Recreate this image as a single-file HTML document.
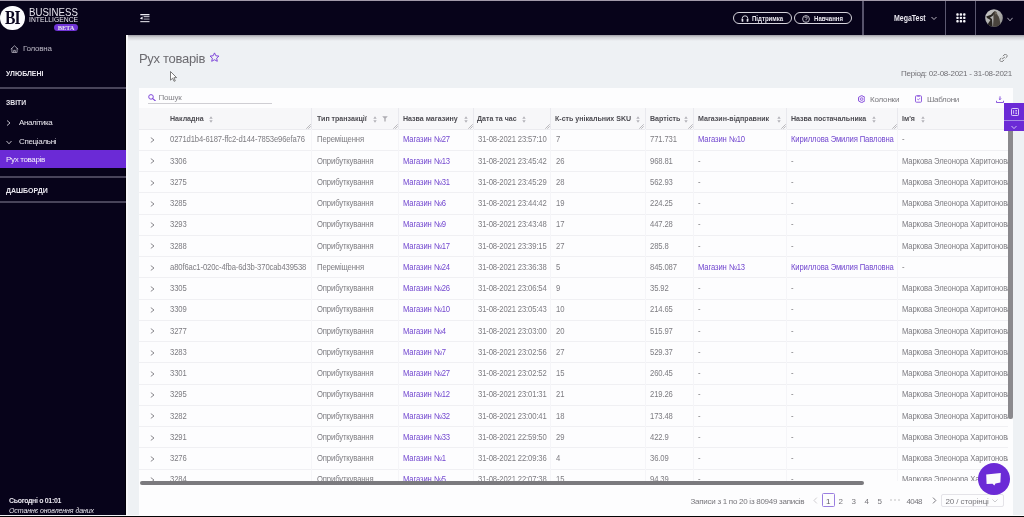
<!DOCTYPE html>
<html><head><meta charset="utf-8">
<style>
*{box-sizing:border-box;margin:0;padding:0}
html,body{width:1024px;height:517px;overflow:hidden;background:#eef1f4;font-family:"Liberation Sans",sans-serif;position:relative}
.abs{position:absolute}
#topline{left:0;top:0;width:1024px;height:1px;background:#a29aaa}
#header{left:0;top:1px;width:1024px;height:34px;background:#07031a}
#hshadow{left:126px;top:35px;width:898px;height:6px;background:linear-gradient(#9d9ca3,#cfd0d4 35%,#eef1f4)}
#sidebar{left:0;top:35px;width:126px;height:480px;background:#07031a}
#sbline{left:126px;top:35px;width:2px;height:480px;background:#f8f8fa}
#bottombar{left:0;top:516px;width:1024px;height:1px;background:#050505}
.wt{color:#e8e6ee;white-space:nowrap}
.sep{left:0;width:126px;height:2px;background:#48445a}
#card{left:139px;top:88px;width:874px;height:427px;background:#fdfdfe}
.hd{position:absolute;top:108px;height:22px;background:#f7f7f9;border-bottom:1px solid #ebebef}
.hcell{position:absolute;top:113.6px;font-size:7.8px;font-weight:bold;color:#4d4c52;line-height:10px;white-space:nowrap;transform:scaleX(0.905);transform-origin:0 0}
.vline{position:absolute;width:1px;background:#eeeef2}
.row{position:absolute;left:139px;width:874px;height:1px;background:#eeeef1}
.c{position:absolute;font-size:8.3px;letter-spacing:-0.15px;color:#7d7c81;white-space:nowrap;line-height:10px;transform:scaleX(0.925);transform-origin:0 0}
.p{color:#7247cf}
.pg{top:496.6px;font-size:8px;line-height:10px;color:#77767b;white-space:nowrap}
#wrap{position:absolute;left:0;top:0;width:1024px;height:517px;overflow:hidden;will-change:transform}
</style></head><body><div id="wrap">
<div class="abs" id="topline"></div>
<div class="abs" id="header"></div>
<div class="abs" id="sidebar"></div>
<div class="abs" id="hshadow"></div>
<div class="abs" id="sbline"></div>
<div class="abs" style="left:125px;top:35px;width:1px;height:480px;background:#020008"></div>

<!-- logo -->
<div class="abs" style="left:0;top:5.5px;width:24.6px;height:24.6px;border-radius:50%;background:#fbfbfd"></div>
<div class="abs" style="left:4.5px;top:8px;font-family:'Liberation Serif',serif;font-weight:bold;font-size:19px;line-height:19px;color:#0b0620;letter-spacing:-1.2px;transform:scaleX(0.82);transform-origin:0 50%">BI</div>
<div class="abs wt" style="left:29px;top:7px;font-size:10.5px;line-height:10px;transform:scaleX(0.92);transform-origin:0 0">BUSINESS</div>
<div class="abs wt" style="left:29px;top:16px;font-size:8px;line-height:8px;transform:scaleX(0.85);transform-origin:0 0">INTELLIGENCE</div>
<div class="abs" style="left:54px;top:24px;width:24px;height:7px;border-radius:4px;background:#7034d6"></div>
<div class="abs wt" style="left:54px;top:24px;width:24px;text-align:center;font-family:'Liberation Serif',serif;font-weight:bold;font-size:6.5px;line-height:7px;letter-spacing:-0.2px">BETA</div>

<!-- hamburger -->
<svg class="abs" style="left:139.5px;top:13.8px" width="10" height="9" viewBox="0 0 10 9"><g fill="#ecebf2"><rect x="0.3" y="0" width="9.2" height="1.3"/><rect x="3.6" y="2.1" width="5.9" height="1.1" opacity="0.85"/><rect x="3.6" y="4.5" width="5.9" height="1.2" opacity="0.6"/><rect x="0.3" y="7" width="9.2" height="1.2" opacity="0.85"/><path d="M2.6 2.5 L0.3 3.9 Q0.2 4.6 0.6 5 L2.6 5.5Z"/></g></svg>

<!-- header buttons -->
<div class="abs" style="left:733px;top:12px;width:59px;height:12px;border:1px solid #d6d4dc;border-radius:6px"></div>
<div class="abs" style="left:794px;top:12px;width:58px;height:12px;border:1px solid #d6d4dc;border-radius:6px"></div>
<div class="abs wt" style="left:752px;top:13.5px;font-size:7.6px;line-height:10px;font-weight:bold;transform:scaleX(0.8);transform-origin:0 0">Підтримка</div>
<div class="abs wt" style="left:814px;top:13.5px;font-size:7.6px;line-height:10px;font-weight:bold;transform:scaleX(0.8);transform-origin:0 0">Навчання</div>
<svg class="abs" style="left:741px;top:14.5px" width="8" height="7" viewBox="0 0 8 7"><path d="M1.2 5.5 V3.6 A2.8 2.8 0 0 1 6.8 3.6 V5.5" fill="none" stroke="#e8e6ee" stroke-width="0.9"/><rect x="0.7" y="4" width="1.6" height="2.8" rx="0.4" fill="#e8e6ee"/><rect x="5.7" y="4" width="1.6" height="2.8" rx="0.4" fill="#e8e6ee"/></svg>
<svg class="abs" style="left:802px;top:14.5px" width="8" height="8" viewBox="0 0 8 8"><circle cx="4" cy="4" r="3.4" fill="none" stroke="#e8e6ee" stroke-width="0.8"/><path d="M2.9 3 A1.15 1.15 0 1 1 4.4 4.1 Q4 4.3 4 4.9" fill="none" stroke="#e8e6ee" stroke-width="0.75"/><circle cx="4" cy="5.9" r="0.45" fill="#e8e6ee"/></svg>
<div class="abs" style="left:862px;top:1px;width:2px;height:34px;background:#57536b"></div>
<div class="abs" style="left:944.5px;top:1px;width:1.6px;height:34px;background:#5b5870"></div>
<div class="abs" style="left:974.8px;top:1px;width:1.6px;height:34px;background:#5b5870"></div>
<div class="abs wt" style="left:894px;top:12.5px;font-size:8.5px;line-height:10px;font-weight:bold;transform:scaleX(0.82);transform-origin:0 0">MegaTest</div>
<svg class="abs" style="left:930.5px;top:15.5px" width="6" height="5" viewBox="0 0 6 5"><path d="M0.5 1 L3 3.5 L5.5 1" fill="none" stroke="#e8e6ee" stroke-width="0.8"/></svg>
<svg class="abs" style="left:955.5px;top:13px" width="10" height="10" viewBox="0 0 10 10"><g fill="#f6f6fa"><rect x="0.3" y="0.3" width="2.4" height="2.4" rx="0.8"/><rect x="3.7" y="0.3" width="2.4" height="2.4" rx="0.8"/><rect x="7.1" y="0.3" width="2.4" height="2.4" rx="0.8"/><rect x="0.3" y="3.7" width="2.4" height="2.4" rx="0.8"/><rect x="3.7" y="3.7" width="2.4" height="2.4" rx="0.8"/><rect x="7.1" y="3.7" width="2.4" height="2.4" rx="0.8"/><rect x="0.3" y="7.1" width="2.4" height="2.4" rx="0.8"/><rect x="3.7" y="7.1" width="2.4" height="2.4" rx="0.8"/><rect x="7.1" y="7.1" width="2.4" height="2.4" rx="0.8"/></g></svg>
<svg class="abs" style="left:984.5px;top:8.6px" width="18" height="18" viewBox="0 0 18 18"><defs><clipPath id="av"><circle cx="9" cy="9" r="8.8"/></clipPath><linearGradient id="ag" x1="0" y1="0" x2="1" y2="1"><stop offset="0" stop-color="#cfcfcf"/><stop offset="1" stop-color="#8d8c8a"/></linearGradient></defs><g clip-path="url(#av)"><rect width="18" height="18" fill="url(#ag)"/><path d="M1.2 7.5 L6 5.8 L8.5 3 L10 2.6 L9.6 4.6 L7.5 7 L5 8.5 L7 10 L7.5 18 H1.5 Q3 14 5.5 11 L2 9Z" fill="#2a2622"/><path d="M9 2.5 Q11.5 1.5 12 4 L12.5 6 Q15 8 15.5 18 H8 L8.5 10 Q8 6 9 2.5Z" fill="#4a443d"/><path d="M10.5 3 Q12 3 11.8 5 L10.5 5.5Z" fill="#8a8175"/></g></svg>
<svg class="abs" style="left:1006.5px;top:16.5px" width="6" height="5" viewBox="0 0 6 5"><path d="M0.4 0.8 L3 3.8 L5.6 0.8" fill="none" stroke="#d8d6de" stroke-width="0.8"/></svg>

<!-- sidebar -->
<svg class="abs" style="left:10px;top:44.5px" width="9" height="8" viewBox="0 0 9 8"><path d="M0.8 4.2 L4.5 0.8 L8.2 4.2 M1.9 3.2 V7.4 H7.1 V3.2 M3.7 7.4 V5.3 H5.3 V7.4" fill="none" stroke="#bdbac6" stroke-width="0.8" stroke-linejoin="round"/></svg>
<div class="abs wt" style="left:23px;top:44px;font-size:8px;line-height:10px;color:#bdbac6;letter-spacing:-0.24px">Головна</div>
<div class="abs wt" style="left:6px;top:69px;font-size:8px;line-height:10px;font-weight:bold;transform:scaleX(0.87);transform-origin:0 0">УЛЮБЛЕНІ</div>
<div class="abs sep" style="top:87px"></div>
<div class="abs wt" style="left:6px;top:98px;font-size:8px;line-height:10px;font-weight:bold;transform:scaleX(0.85);transform-origin:0 0">ЗВІТИ</div>
<svg class="abs" style="left:6px;top:120px" width="5" height="6" viewBox="0 0 5 6"><path d="M1 0.5 L4 3 L1 5.5" fill="none" stroke="#e8e6ee" stroke-width="0.8"/></svg>
<div class="abs wt" style="left:19px;top:118px;font-size:8px;line-height:10px;letter-spacing:-0.39px">Аналітика</div>
<svg class="abs" style="left:6px;top:139.5px" width="6" height="5" viewBox="0 0 6 5"><path d="M0.5 1 L3 3.8 L5.5 1" fill="none" stroke="#e8e6ee" stroke-width="0.8"/></svg>
<div class="abs wt" style="left:19px;top:137px;font-size:8px;line-height:10px;letter-spacing:-0.32px">Спеціальні</div>
<div class="abs" style="left:0;top:150px;width:126px;height:18px;background:#6b2ad6"></div>
<div class="abs wt" style="left:6px;top:155px;font-size:8px;line-height:10px;color:#f4f0fb;letter-spacing:-0.35px">Рух товарів</div>
<div class="abs sep" style="top:176px"></div>
<div class="abs wt" style="left:6px;top:186px;font-size:8px;line-height:10px;font-weight:bold;transform:scaleX(0.875);transform-origin:0 0">ДАШБОРДИ</div>
<div class="abs sep" style="top:201px"></div>
<div class="abs wt" style="left:9px;top:496.5px;font-size:7px;line-height:8px;font-weight:bold;letter-spacing:-0.33px">Сьогодні о 01:01</div>
<div class="abs wt" style="left:9px;top:506.5px;font-size:7px;line-height:8px;font-style:italic;letter-spacing:-0.09px">Останнє оновлення даних</div>

<!-- page title -->
<div class="abs" style="left:139px;top:51px;font-size:13px;line-height:16px;color:#6c6b70;white-space:nowrap;letter-spacing:-0.3px">Рух товарів</div>
<svg class="abs" style="left:209px;top:51.8px" width="11" height="11" viewBox="0 0 11 11"><path d="M5.5 0.9 L6.85 3.75 L9.95 4.1 L7.65 6.2 L8.3 9.3 L5.5 7.75 L2.7 9.3 L3.35 6.2 L1.05 4.1 L4.15 3.75Z" fill="none" stroke="#7a3fd8" stroke-width="0.95" stroke-linejoin="round"/></svg>
<svg class="abs" style="left:170px;top:70.8px" width="8" height="11" viewBox="0 0 8 11"><path d="M0.5 0.5 V9.2 L2.6 7.2 L4.1 10.3 L5.3 9.8 L3.9 6.7 L6.6 6.6Z" fill="#fff" stroke="#5a5a5a" stroke-width="0.8" stroke-linejoin="round"/></svg>
<svg class="abs" style="left:999px;top:54px" width="9" height="8" viewBox="0 0 9 8"><g fill="none" stroke="#777" stroke-width="0.9"><path d="M3.8 2.2 L5 1 A1.5 1.5 0 0 1 7.8 3 L6.6 4.2"/><path d="M5.2 5.8 L4 7 A1.5 1.5 0 0 1 1.2 5 L2.4 3.8"/><path d="M3 5 L6 3"/></g></svg>
<div class="abs" style="left:901px;top:69px;font-size:8px;letter-spacing:-0.25px;line-height:10px;color:#717075;white-space:nowrap">Період: 02-08-2021 - 31-08-2021</div>

<!-- card -->
<div class="abs" id="card"></div>
<svg class="abs" style="left:148px;top:93.5px" width="8" height="7" viewBox="0 0 8 7"><circle cx="3" cy="2.9" r="2.3" fill="none" stroke="#7a3fd8" stroke-width="0.95"/><path d="M4.7 4.6 L7.2 6.7" stroke="#7a3fd8" stroke-width="1.1" stroke-linecap="round"/></svg>
<div class="abs" style="left:158.5px;top:92.6px;font-size:8px;letter-spacing:-0.19px;line-height:10px;color:#858489">Пошук</div>
<div class="abs" style="left:148px;top:103px;width:124px;height:1px;background:#cfced3"></div>
<svg class="abs" style="left:858px;top:94.8px" width="7.4" height="8.2" viewBox="0 0 7.4 8.2"><path d="M3.7 0.5 L6.9 2.3 V5.9 L3.7 7.7 L0.5 5.9 V2.3Z" fill="#efe6fb" stroke="#8b55dd" stroke-width="1"/><circle cx="3.7" cy="4.1" r="1.3" fill="none" stroke="#8b55dd" stroke-width="0.8"/></svg>
<div class="abs" style="left:870px;top:95px;font-size:8px;letter-spacing:-0.19px;line-height:10px;color:#7a797e">Колонки</div>
<svg class="abs" style="left:915px;top:95px" width="7" height="7.6" viewBox="0 0 7 7.6"><rect x="0.5" y="0.8" width="6" height="6.4" rx="0.8" fill="none" stroke="#8b55dd" stroke-width="0.95"/><path d="M2.2 0.4 H4.8 V1.6 H2.2Z" fill="#8b55dd"/><path d="M2.2 4 L3.3 5 L4.9 3.2" fill="none" stroke="#8b55dd" stroke-width="0.8"/></svg>
<div class="abs" style="left:927px;top:95px;font-size:8px;letter-spacing:-0.3px;line-height:10px;color:#7a797e">Шаблони</div>
<svg class="abs" style="left:996px;top:96px" width="8" height="7" viewBox="0 0 8 7"><path d="M4 0.3 V3.6 M2.9 2.6 L4 3.7 L5.1 2.6 M0.5 4.8 V6.5 H7.5 V4.8" fill="none" stroke="#7a3fd8" stroke-width="0.85"/></svg>

<!-- table header -->
<div class="hd" style="left:139px;width:865px"></div>
<div class="hcell" style="left:170px">Накладна</div>
<svg class="abs" style="left:209px;top:115.5px" width="4" height="7" viewBox="0 0 4 7"><path d="M2 0.3 L3.7 2.8 H0.3Z M2 6.7 L3.7 4.2 H0.3Z" fill="#b3b2b8"/></svg>
<div class="hcell" style="left:316.8px">Тип транзакції</div>
<svg class="abs" style="left:372.5px;top:115.5px" width="4" height="7" viewBox="0 0 4 7"><path d="M2 0.3 L3.7 2.8 H0.3Z M2 6.7 L3.7 4.2 H0.3Z" fill="#b3b2b8"/></svg>
<svg class="abs" style="left:382px;top:115.5px" width="6" height="6" viewBox="0 0 6 6"><path d="M0.2 0.3 H5.8 L3.7 2.6 V5.4 H2.3 V2.6Z" fill="#aeadb3"/></svg>
<div class="hcell" style="left:403px">Назва магазину</div>
<svg class="abs" style="left:463.5px;top:115.5px" width="4" height="7" viewBox="0 0 4 7"><path d="M2 0.3 L3.7 2.8 H0.3Z M2 6.7 L3.7 4.2 H0.3Z" fill="#b3b2b8"/></svg>
<div class="hcell" style="left:477.4px">Дата та час</div>
<svg class="abs" style="left:522px;top:115.5px" width="4" height="7" viewBox="0 0 4 7"><path d="M2 0.3 L3.7 2.8 H0.3Z M2 6.7 L3.7 4.2 H0.3Z" fill="#b3b2b8"/></svg>
<div class="hcell" style="left:555px">К-сть унікальних SKU</div>
<svg class="abs" style="left:635.5px;top:115.5px" width="4" height="7" viewBox="0 0 4 7"><path d="M2 0.3 L3.7 2.8 H0.3Z M2 6.7 L3.7 4.2 H0.3Z" fill="#b3b2b8"/></svg>
<div class="hcell" style="left:650px">Вартість</div>
<svg class="abs" style="left:683.9px;top:115.5px" width="4" height="7" viewBox="0 0 4 7"><path d="M2 0.3 L3.7 2.8 H0.3Z M2 6.7 L3.7 4.2 H0.3Z" fill="#b3b2b8"/></svg>
<div class="hcell" style="left:698.4px">Магазин-відправник</div>
<svg class="abs" style="left:777.2px;top:115.5px" width="4" height="7" viewBox="0 0 4 7"><path d="M2 0.3 L3.7 2.8 H0.3Z M2 6.7 L3.7 4.2 H0.3Z" fill="#b3b2b8"/></svg>
<div class="hcell" style="left:791.1px">Назва постачальника</div>
<svg class="abs" style="left:872.3px;top:115.5px" width="4" height="7" viewBox="0 0 4 7"><path d="M2 0.3 L3.7 2.8 H0.3Z M2 6.7 L3.7 4.2 H0.3Z" fill="#b3b2b8"/></svg>
<div class="hcell" style="left:902.2px">Ім'я</div>
<svg class="abs" style="left:921px;top:115.5px" width="4" height="7" viewBox="0 0 4 7"><path d="M2 0.3 L3.7 2.8 H0.3Z M2 6.7 L3.7 4.2 H0.3Z" fill="#b3b2b8"/></svg>
<div class="vline" style="left:311px;top:108px;height:21px;background:#e9e9ee"></div>
<svg class="abs" style="left:305.7px;top:123.5px" width="5" height="5" viewBox="0 0 5 5"><path d="M0.3 4.7 L4.7 0.3 M2.3 4.7 L4.7 2.3" stroke="#8e8d93" stroke-width="0.6"/></svg>
<div class="vline" style="left:398px;top:108px;height:21px;background:#e9e9ee"></div>
<svg class="abs" style="left:392.7px;top:123.5px" width="5" height="5" viewBox="0 0 5 5"><path d="M0.3 4.7 L4.7 0.3 M2.3 4.7 L4.7 2.3" stroke="#8e8d93" stroke-width="0.6"/></svg>
<div class="vline" style="left:473px;top:108px;height:21px;background:#e9e9ee"></div>
<svg class="abs" style="left:467.7px;top:123.5px" width="5" height="5" viewBox="0 0 5 5"><path d="M0.3 4.7 L4.7 0.3 M2.3 4.7 L4.7 2.3" stroke="#8e8d93" stroke-width="0.6"/></svg>
<div class="vline" style="left:550px;top:108px;height:21px;background:#e9e9ee"></div>
<svg class="abs" style="left:544.7px;top:123.5px" width="5" height="5" viewBox="0 0 5 5"><path d="M0.3 4.7 L4.7 0.3 M2.3 4.7 L4.7 2.3" stroke="#8e8d93" stroke-width="0.6"/></svg>
<div class="vline" style="left:644.6px;top:108px;height:21px;background:#e9e9ee"></div>
<svg class="abs" style="left:639.3000000000001px;top:123.5px" width="5" height="5" viewBox="0 0 5 5"><path d="M0.3 4.7 L4.7 0.3 M2.3 4.7 L4.7 2.3" stroke="#8e8d93" stroke-width="0.6"/></svg>
<div class="vline" style="left:693px;top:108px;height:21px;background:#e9e9ee"></div>
<svg class="abs" style="left:687.7px;top:123.5px" width="5" height="5" viewBox="0 0 5 5"><path d="M0.3 4.7 L4.7 0.3 M2.3 4.7 L4.7 2.3" stroke="#8e8d93" stroke-width="0.6"/></svg>
<div class="vline" style="left:786px;top:108px;height:21px;background:#e9e9ee"></div>
<svg class="abs" style="left:780.7px;top:123.5px" width="5" height="5" viewBox="0 0 5 5"><path d="M0.3 4.7 L4.7 0.3 M2.3 4.7 L4.7 2.3" stroke="#8e8d93" stroke-width="0.6"/></svg>
<div class="vline" style="left:897px;top:108px;height:21px;background:#e9e9ee"></div>
<svg class="abs" style="left:891.7px;top:123.5px" width="5" height="5" viewBox="0 0 5 5"><path d="M0.3 4.7 L4.7 0.3 M2.3 4.7 L4.7 2.3" stroke="#8e8d93" stroke-width="0.6"/></svg>
<div class="abs" style="left:139px;top:129px;width:869px;height:352px;overflow:hidden">
<div class="abs" style="left:0;top:20.75px;width:874px;height:1px;background:#f0f0f3"></div>
<svg class="abs" style="left:11px;top:8.20px" width="5" height="6" viewBox="0 0 5 6"><path d="M0.8 0.6 L4 3 L0.8 5.4" fill="none" stroke="#6e6d73" stroke-width="0.8"/></svg>
<div class="c" style="left:31px;top:5.22px">0271d1b4-6187-ffc2-d144-7853e96efa76</div>
<div class="c" style="left:177.5px;top:5.22px">Переміщення</div>
<div class="c p" style="left:264px;top:5.22px">Магазин №27</div>
<div class="c" style="left:338.5px;top:5.22px">31-08-2021 23:57:10</div>
<div class="c" style="left:416.5px;top:5.22px">7</div>
<div class="c" style="left:510.70000000000005px;top:5.22px">771.731</div>
<div class="c p" style="left:559px;top:5.22px">Магазин №10</div>
<div class="c p" style="left:652px;top:5.22px">Кириллова Эмилия Павловна</div>
<div class="c" style="left:763px;top:5.22px">-</div>
<div class="abs" style="left:0;top:42.00px;width:874px;height:1px;background:#f0f0f3"></div>
<svg class="abs" style="left:11px;top:29.45px" width="5" height="6" viewBox="0 0 5 6"><path d="M0.8 0.6 L4 3 L0.8 5.4" fill="none" stroke="#6e6d73" stroke-width="0.8"/></svg>
<div class="c" style="left:31px;top:27.22px">3306</div>
<div class="c" style="left:177.5px;top:27.22px">Оприбуткування</div>
<div class="c p" style="left:264px;top:27.22px">Магазин №13</div>
<div class="c" style="left:338.5px;top:27.22px">31-08-2021 23:45:42</div>
<div class="c" style="left:416.5px;top:27.22px">26</div>
<div class="c" style="left:510.70000000000005px;top:27.22px">968.81</div>
<div class="c" style="left:559px;top:27.22px">-</div>
<div class="c" style="left:652px;top:27.22px">-</div>
<div class="c" style="left:763px;top:27.22px">Маркова Элеонора Харитонова</div>
<div class="abs" style="left:0;top:63.25px;width:874px;height:1px;background:#f0f0f3"></div>
<svg class="abs" style="left:11px;top:50.70px" width="5" height="6" viewBox="0 0 5 6"><path d="M0.8 0.6 L4 3 L0.8 5.4" fill="none" stroke="#6e6d73" stroke-width="0.8"/></svg>
<div class="c" style="left:31px;top:48.22px">3275</div>
<div class="c" style="left:177.5px;top:48.22px">Оприбуткування</div>
<div class="c p" style="left:264px;top:48.22px">Магазин №31</div>
<div class="c" style="left:338.5px;top:48.22px">31-08-2021 23:45:29</div>
<div class="c" style="left:416.5px;top:48.22px">28</div>
<div class="c" style="left:510.70000000000005px;top:48.22px">562.93</div>
<div class="c" style="left:559px;top:48.22px">-</div>
<div class="c" style="left:652px;top:48.22px">-</div>
<div class="c" style="left:763px;top:48.22px">Маркова Элеонора Харитонова</div>
<div class="abs" style="left:0;top:84.50px;width:874px;height:1px;background:#f0f0f3"></div>
<svg class="abs" style="left:11px;top:71.95px" width="5" height="6" viewBox="0 0 5 6"><path d="M0.8 0.6 L4 3 L0.8 5.4" fill="none" stroke="#6e6d73" stroke-width="0.8"/></svg>
<div class="c" style="left:31px;top:69.22px">3285</div>
<div class="c" style="left:177.5px;top:69.22px">Оприбуткування</div>
<div class="c p" style="left:264px;top:69.22px">Магазин №6</div>
<div class="c" style="left:338.5px;top:69.22px">31-08-2021 23:44:42</div>
<div class="c" style="left:416.5px;top:69.22px">19</div>
<div class="c" style="left:510.70000000000005px;top:69.22px">224.25</div>
<div class="c" style="left:559px;top:69.22px">-</div>
<div class="c" style="left:652px;top:69.22px">-</div>
<div class="c" style="left:763px;top:69.22px">Маркова Элеонора Харитонова</div>
<div class="abs" style="left:0;top:105.75px;width:874px;height:1px;background:#f0f0f3"></div>
<svg class="abs" style="left:11px;top:93.20px" width="5" height="6" viewBox="0 0 5 6"><path d="M0.8 0.6 L4 3 L0.8 5.4" fill="none" stroke="#6e6d73" stroke-width="0.8"/></svg>
<div class="c" style="left:31px;top:90.22px">3293</div>
<div class="c" style="left:177.5px;top:90.22px">Оприбуткування</div>
<div class="c p" style="left:264px;top:90.22px">Магазин №9</div>
<div class="c" style="left:338.5px;top:90.22px">31-08-2021 23:43:48</div>
<div class="c" style="left:416.5px;top:90.22px">17</div>
<div class="c" style="left:510.70000000000005px;top:90.22px">447.28</div>
<div class="c" style="left:559px;top:90.22px">-</div>
<div class="c" style="left:652px;top:90.22px">-</div>
<div class="c" style="left:763px;top:90.22px">Маркова Элеонора Харитонова</div>
<div class="abs" style="left:0;top:127.00px;width:874px;height:1px;background:#f0f0f3"></div>
<svg class="abs" style="left:11px;top:114.45px" width="5" height="6" viewBox="0 0 5 6"><path d="M0.8 0.6 L4 3 L0.8 5.4" fill="none" stroke="#6e6d73" stroke-width="0.8"/></svg>
<div class="c" style="left:31px;top:112.22px">3288</div>
<div class="c" style="left:177.5px;top:112.22px">Оприбуткування</div>
<div class="c p" style="left:264px;top:112.22px">Магазин №17</div>
<div class="c" style="left:338.5px;top:112.22px">31-08-2021 23:39:15</div>
<div class="c" style="left:416.5px;top:112.22px">27</div>
<div class="c" style="left:510.70000000000005px;top:112.22px">285.8</div>
<div class="c" style="left:559px;top:112.22px">-</div>
<div class="c" style="left:652px;top:112.22px">-</div>
<div class="c" style="left:763px;top:112.22px">Маркова Элеонора Харитонова</div>
<div class="abs" style="left:0;top:148.25px;width:874px;height:1px;background:#f0f0f3"></div>
<svg class="abs" style="left:11px;top:135.70px" width="5" height="6" viewBox="0 0 5 6"><path d="M0.8 0.6 L4 3 L0.8 5.4" fill="none" stroke="#6e6d73" stroke-width="0.8"/></svg>
<div class="c" style="left:31px;top:133.22px">a80f6ac1-020c-4fba-6d3b-370cab439538</div>
<div class="c" style="left:177.5px;top:133.22px">Переміщення</div>
<div class="c p" style="left:264px;top:133.22px">Магазин №24</div>
<div class="c" style="left:338.5px;top:133.22px">31-08-2021 23:36:38</div>
<div class="c" style="left:416.5px;top:133.22px">5</div>
<div class="c" style="left:510.70000000000005px;top:133.22px">845.087</div>
<div class="c p" style="left:559px;top:133.22px">Магазин №13</div>
<div class="c p" style="left:652px;top:133.22px">Кириллова Эмилия Павловна</div>
<div class="c" style="left:763px;top:133.22px">-</div>
<div class="abs" style="left:0;top:169.50px;width:874px;height:1px;background:#f0f0f3"></div>
<svg class="abs" style="left:11px;top:156.95px" width="5" height="6" viewBox="0 0 5 6"><path d="M0.8 0.6 L4 3 L0.8 5.4" fill="none" stroke="#6e6d73" stroke-width="0.8"/></svg>
<div class="c" style="left:31px;top:154.22px">3305</div>
<div class="c" style="left:177.5px;top:154.22px">Оприбуткування</div>
<div class="c p" style="left:264px;top:154.22px">Магазин №26</div>
<div class="c" style="left:338.5px;top:154.22px">31-08-2021 23:06:54</div>
<div class="c" style="left:416.5px;top:154.22px">9</div>
<div class="c" style="left:510.70000000000005px;top:154.22px">35.92</div>
<div class="c" style="left:559px;top:154.22px">-</div>
<div class="c" style="left:652px;top:154.22px">-</div>
<div class="c" style="left:763px;top:154.22px">Маркова Элеонора Харитонова</div>
<div class="abs" style="left:0;top:190.75px;width:874px;height:1px;background:#f0f0f3"></div>
<svg class="abs" style="left:11px;top:178.20px" width="5" height="6" viewBox="0 0 5 6"><path d="M0.8 0.6 L4 3 L0.8 5.4" fill="none" stroke="#6e6d73" stroke-width="0.8"/></svg>
<div class="c" style="left:31px;top:175.22px">3309</div>
<div class="c" style="left:177.5px;top:175.22px">Оприбуткування</div>
<div class="c p" style="left:264px;top:175.22px">Магазин №10</div>
<div class="c" style="left:338.5px;top:175.22px">31-08-2021 23:05:43</div>
<div class="c" style="left:416.5px;top:175.22px">10</div>
<div class="c" style="left:510.70000000000005px;top:175.22px">214.65</div>
<div class="c" style="left:559px;top:175.22px">-</div>
<div class="c" style="left:652px;top:175.22px">-</div>
<div class="c" style="left:763px;top:175.22px">Маркова Элеонора Харитонова</div>
<div class="abs" style="left:0;top:212.00px;width:874px;height:1px;background:#f0f0f3"></div>
<svg class="abs" style="left:11px;top:199.45px" width="5" height="6" viewBox="0 0 5 6"><path d="M0.8 0.6 L4 3 L0.8 5.4" fill="none" stroke="#6e6d73" stroke-width="0.8"/></svg>
<div class="c" style="left:31px;top:197.22px">3277</div>
<div class="c" style="left:177.5px;top:197.22px">Оприбуткування</div>
<div class="c p" style="left:264px;top:197.22px">Магазин №4</div>
<div class="c" style="left:338.5px;top:197.22px">31-08-2021 23:03:00</div>
<div class="c" style="left:416.5px;top:197.22px">20</div>
<div class="c" style="left:510.70000000000005px;top:197.22px">515.97</div>
<div class="c" style="left:559px;top:197.22px">-</div>
<div class="c" style="left:652px;top:197.22px">-</div>
<div class="c" style="left:763px;top:197.22px">Маркова Элеонора Харитонова</div>
<div class="abs" style="left:0;top:233.25px;width:874px;height:1px;background:#f0f0f3"></div>
<svg class="abs" style="left:11px;top:220.70px" width="5" height="6" viewBox="0 0 5 6"><path d="M0.8 0.6 L4 3 L0.8 5.4" fill="none" stroke="#6e6d73" stroke-width="0.8"/></svg>
<div class="c" style="left:31px;top:218.22px">3283</div>
<div class="c" style="left:177.5px;top:218.22px">Оприбуткування</div>
<div class="c p" style="left:264px;top:218.22px">Магазин №7</div>
<div class="c" style="left:338.5px;top:218.22px">31-08-2021 23:02:56</div>
<div class="c" style="left:416.5px;top:218.22px">27</div>
<div class="c" style="left:510.70000000000005px;top:218.22px">529.37</div>
<div class="c" style="left:559px;top:218.22px">-</div>
<div class="c" style="left:652px;top:218.22px">-</div>
<div class="c" style="left:763px;top:218.22px">Маркова Элеонора Харитонова</div>
<div class="abs" style="left:0;top:254.50px;width:874px;height:1px;background:#f0f0f3"></div>
<svg class="abs" style="left:11px;top:241.95px" width="5" height="6" viewBox="0 0 5 6"><path d="M0.8 0.6 L4 3 L0.8 5.4" fill="none" stroke="#6e6d73" stroke-width="0.8"/></svg>
<div class="c" style="left:31px;top:239.22px">3301</div>
<div class="c" style="left:177.5px;top:239.22px">Оприбуткування</div>
<div class="c p" style="left:264px;top:239.22px">Магазин №27</div>
<div class="c" style="left:338.5px;top:239.22px">31-08-2021 23:02:52</div>
<div class="c" style="left:416.5px;top:239.22px">15</div>
<div class="c" style="left:510.70000000000005px;top:239.22px">260.45</div>
<div class="c" style="left:559px;top:239.22px">-</div>
<div class="c" style="left:652px;top:239.22px">-</div>
<div class="c" style="left:763px;top:239.22px">Маркова Элеонора Харитонова</div>
<div class="abs" style="left:0;top:275.75px;width:874px;height:1px;background:#f0f0f3"></div>
<svg class="abs" style="left:11px;top:263.20px" width="5" height="6" viewBox="0 0 5 6"><path d="M0.8 0.6 L4 3 L0.8 5.4" fill="none" stroke="#6e6d73" stroke-width="0.8"/></svg>
<div class="c" style="left:31px;top:260.22px">3295</div>
<div class="c" style="left:177.5px;top:260.22px">Оприбуткування</div>
<div class="c p" style="left:264px;top:260.22px">Магазин №12</div>
<div class="c" style="left:338.5px;top:260.22px">31-08-2021 23:01:31</div>
<div class="c" style="left:416.5px;top:260.22px">21</div>
<div class="c" style="left:510.70000000000005px;top:260.22px">219.26</div>
<div class="c" style="left:559px;top:260.22px">-</div>
<div class="c" style="left:652px;top:260.22px">-</div>
<div class="c" style="left:763px;top:260.22px">Маркова Элеонора Харитонова</div>
<div class="abs" style="left:0;top:297.00px;width:874px;height:1px;background:#f0f0f3"></div>
<svg class="abs" style="left:11px;top:284.45px" width="5" height="6" viewBox="0 0 5 6"><path d="M0.8 0.6 L4 3 L0.8 5.4" fill="none" stroke="#6e6d73" stroke-width="0.8"/></svg>
<div class="c" style="left:31px;top:282.22px">3282</div>
<div class="c" style="left:177.5px;top:282.22px">Оприбуткування</div>
<div class="c p" style="left:264px;top:282.22px">Магазин №32</div>
<div class="c" style="left:338.5px;top:282.22px">31-08-2021 23:00:41</div>
<div class="c" style="left:416.5px;top:282.22px">18</div>
<div class="c" style="left:510.70000000000005px;top:282.22px">173.48</div>
<div class="c" style="left:559px;top:282.22px">-</div>
<div class="c" style="left:652px;top:282.22px">-</div>
<div class="c" style="left:763px;top:282.22px">Маркова Элеонора Харитонова</div>
<div class="abs" style="left:0;top:318.25px;width:874px;height:1px;background:#f0f0f3"></div>
<svg class="abs" style="left:11px;top:305.70px" width="5" height="6" viewBox="0 0 5 6"><path d="M0.8 0.6 L4 3 L0.8 5.4" fill="none" stroke="#6e6d73" stroke-width="0.8"/></svg>
<div class="c" style="left:31px;top:303.22px">3291</div>
<div class="c" style="left:177.5px;top:303.22px">Оприбуткування</div>
<div class="c p" style="left:264px;top:303.22px">Магазин №33</div>
<div class="c" style="left:338.5px;top:303.22px">31-08-2021 22:59:50</div>
<div class="c" style="left:416.5px;top:303.22px">29</div>
<div class="c" style="left:510.70000000000005px;top:303.22px">422.9</div>
<div class="c" style="left:559px;top:303.22px">-</div>
<div class="c" style="left:652px;top:303.22px">-</div>
<div class="c" style="left:763px;top:303.22px">Маркова Элеонора Харитонова</div>
<div class="abs" style="left:0;top:339.50px;width:874px;height:1px;background:#f0f0f3"></div>
<svg class="abs" style="left:11px;top:326.95px" width="5" height="6" viewBox="0 0 5 6"><path d="M0.8 0.6 L4 3 L0.8 5.4" fill="none" stroke="#6e6d73" stroke-width="0.8"/></svg>
<div class="c" style="left:31px;top:324.22px">3276</div>
<div class="c" style="left:177.5px;top:324.22px">Оприбуткування</div>
<div class="c p" style="left:264px;top:324.22px">Магазин №1</div>
<div class="c" style="left:338.5px;top:324.22px">31-08-2021 22:09:36</div>
<div class="c" style="left:416.5px;top:324.22px">4</div>
<div class="c" style="left:510.70000000000005px;top:324.22px">36.09</div>
<div class="c" style="left:559px;top:324.22px">-</div>
<div class="c" style="left:652px;top:324.22px">-</div>
<div class="c" style="left:763px;top:324.22px">Маркова Элеонора Харитонова</div>
<div class="abs" style="left:0;top:360.75px;width:874px;height:1px;background:#f0f0f3"></div>
<svg class="abs" style="left:11px;top:348.20px" width="5" height="6" viewBox="0 0 5 6"><path d="M0.8 0.6 L4 3 L0.8 5.4" fill="none" stroke="#6e6d73" stroke-width="0.8"/></svg>
<div class="c" style="left:31px;top:345.22px">3284</div>
<div class="c" style="left:177.5px;top:345.22px">Оприбуткування</div>
<div class="c p" style="left:264px;top:345.22px">Магазин №5</div>
<div class="c" style="left:338.5px;top:345.22px">31-08-2021 22:07:38</div>
<div class="c" style="left:416.5px;top:345.22px">15</div>
<div class="c" style="left:510.70000000000005px;top:345.22px">94.39</div>
<div class="c" style="left:559px;top:345.22px">-</div>
<div class="c" style="left:652px;top:345.22px">-</div>
<div class="c" style="left:763px;top:345.22px">Маркова Элеонора Харитонова</div>
<div class="vline" style="left:172px;top:0;height:352px;background:#f5f5f8"></div>
<div class="vline" style="left:259px;top:0;height:352px;background:#f5f5f8"></div>
<div class="vline" style="left:334px;top:0;height:352px;background:#f5f5f8"></div>
<div class="vline" style="left:411px;top:0;height:352px;background:#f5f5f8"></div>
<div class="vline" style="left:505.6px;top:0;height:352px;background:#f5f5f8"></div>
<div class="vline" style="left:554px;top:0;height:352px;background:#f5f5f8"></div>
<div class="vline" style="left:647px;top:0;height:352px;background:#f5f5f8"></div>
<div class="vline" style="left:758px;top:0;height:352px;background:#f5f5f8"></div>
</div>

<!-- side purple buttons -->
<div class="abs" style="left:1004px;top:103px;width:20px;height:28px;background:#6b2ad6"></div>
<div class="abs" style="left:1004px;top:120px;width:20px;height:1px;background:#a68ae8"></div>
<svg class="abs" style="left:1010.5px;top:107.5px" width="8" height="8" viewBox="0 0 8 8"><rect x="0.5" y="0.5" width="7" height="7" rx="0.8" fill="none" stroke="#e9e0fa" stroke-width="0.9"/><path d="M2.6 2.2 V5.8 M4.4 2.5 H6 M4.4 4 H6 M4.4 5.5 H6" stroke="#e9e0fa" stroke-width="0.8"/></svg>
<svg class="abs" style="left:1011px;top:124.5px" width="6" height="5" viewBox="0 0 6 5"><path d="M0.5 1 L3 3.6 L5.5 1" fill="none" stroke="#e9e0fa" stroke-width="0.8"/></svg>

<!-- scrollbars -->
<div class="abs" style="left:1008px;top:131px;width:5px;height:288px;background:#8a898d;border-radius:0 0 2px 2px"></div>
<div class="abs" style="left:140px;top:481px;width:724px;height:4px;background:#7b7a7e;border-radius:2px"></div>

<!-- pagination -->
<div class="abs pg" style="left:690.5px;letter-spacing:-0.27px">Записи з 1 по 20 із 80949 записів</div>
<svg class="abs" style="left:813px;top:496.5px" width="5" height="7" viewBox="0 0 5 7"><path d="M3.8 0.6 L1 3.5 L3.8 6.4" fill="none" stroke="#c4c3c8" stroke-width="0.8"/></svg>
<div class="abs" style="left:821.5px;top:493px;width:13.5px;height:13.5px;border:1px solid #9a7ee0;border-radius:1.5px"></div>
<div class="abs pg" style="left:826px;color:#5d5c62">1</div>
<div class="abs pg" style="left:838.5px">2</div>
<div class="abs pg" style="left:851.5px">3</div>
<div class="abs pg" style="left:864.5px">4</div>
<div class="abs pg" style="left:877.5px">5</div>
<svg class="abs" style="left:890px;top:499px" width="10" height="2" viewBox="0 0 10 2"><g fill="#a9a8ad"><circle cx="1" cy="1" r="0.7"/><circle cx="5" cy="1" r="0.7"/><circle cx="9" cy="1" r="0.7"/></g></svg>
<div class="abs pg" style="left:906.5px;letter-spacing:-0.6px">4048</div>
<svg class="abs" style="left:931.5px;top:496.5px" width="5" height="7" viewBox="0 0 5 7"><path d="M1 0.6 L3.8 3.5 L1 6.4" fill="none" stroke="#5d5c62" stroke-width="0.8"/></svg>
<div class="abs" style="left:941px;top:493.5px;width:62.5px;height:13px;border:1px solid #e4e3e8;border-radius:2px"></div>
<div class="abs pg" style="left:945.5px;letter-spacing:-0.1px">20 / сторінці</div>
<svg class="abs" style="left:992px;top:498.5px" width="6" height="4" viewBox="0 0 6 4"><path d="M0.5 0.5 L3 3 L5.5 0.5" fill="none" stroke="#b5b4b9" stroke-width="0.7"/></svg>

<!-- chat bubble -->
<div class="abs" style="left:978px;top:463px;width:32px;height:32px;border-radius:50%;background:#6b2ad6"></div>
<svg class="abs" style="left:985px;top:472px" width="18" height="15" viewBox="0 0 18 15"><path d="M1.2 2.6 L15.8 1 L15.4 10.4 L10.5 11.4 L9.3 13.6 L7.5 11.7 L1.6 12Z" fill="#fbfafd"/></svg>

<div class="abs" style="left:126px;top:515px;width:898px;height:1px;background:#fdfdfe"></div>
<div class="abs" id="bottombar"></div>
</div></body></html>
